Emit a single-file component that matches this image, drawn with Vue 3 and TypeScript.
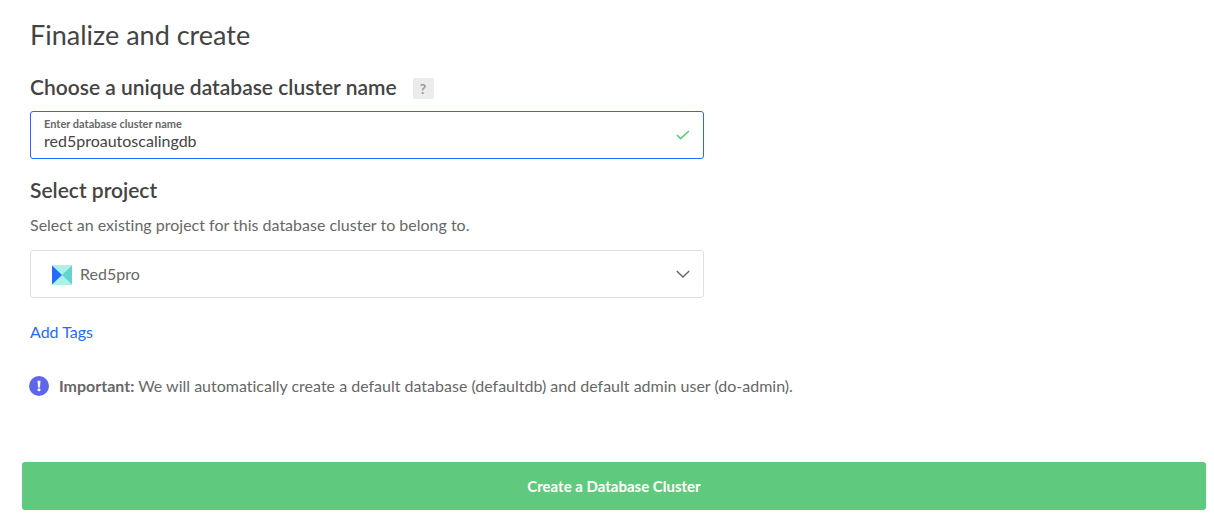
<script setup lang="ts">
import { ref } from 'vue'

const clusterName = ref<string>('red5proautoscalingdb')
const projects: string[] = ['Red5pro']
const project = ref<string>(projects[0])
</script>

<template>
  <main class="page">
    <form class="form" @submit.prevent>
      <div class="content">
        <h1>Finalize and create</h1>

        <section class="group">
          <div class="heading">
            <h2>Choose a unique database cluster name</h2>
            <button type="button" class="help" aria-label="Help with naming">?</button>
          </div>
          <div class="field">
            <label for="cluster-name">Enter database cluster name</label>
            <input id="cluster-name" v-model="clusterName" type="text" autocomplete="off" spellcheck="false" />
            <svg class="mark" width="14" height="10" viewBox="0 0 14 10" aria-hidden="true">
              <path d="M1 5 L4.6 8.6 L13 1" fill="none" stroke="#5fca7d" stroke-width="1.6" />
            </svg>
          </div>
        </section>

        <section class="group">
          <h2>Select project</h2>
          <label class="hint" for="project">Select an existing project for this database cluster to belong to.</label>
          <div class="picker">
            <svg class="logo" width="20" height="20" viewBox="0 0 20 20" aria-hidden="true">
              <rect width="20" height="20" fill="#adf0ea" />
              <path d="M0 0.5 L10 10 L0 19.5 Z" fill="#246bfd" />
              <path d="M20 0.5 L10 10 L20 19.5 Z" fill="#60d5d0" />
            </svg>
            <select id="project" v-model="project">
              <option v-for="name in projects" :key="name" :value="name">{{ name }}</option>
            </select>
            <svg class="mark" width="14" height="10" viewBox="0 0 14 10" aria-hidden="true">
              <path d="M0.8 1.9 L7 8.1 L13.2 1.9" fill="none" stroke="#676767" stroke-width="1.4" />
            </svg>
          </div>
        </section>

        <a class="tags" href="#tags">Add Tags</a>

        <p class="note">
          <svg width="20" height="20" viewBox="0 0 20 20" aria-hidden="true">
            <circle cx="10" cy="10" r="10" fill="#5f66ee" />
            <path d="M8.5 4.8 H11.5 L11 11.4 H9 Z" fill="#fff" />
            <circle cx="10" cy="13.8" r="1.5" fill="#fff" />
          </svg>
          <span><strong>Important:</strong> We will automatically create a default database (defaultdb) and default admin user (do-admin).</span>
        </p>
      </div>

      <button type="submit" class="submit">Create a Database Cluster</button>
    </form>
  </main>
</template>

<style>
body {
  margin: 0;
  background: #fff;
}
</style>

<style scoped>
.page {
  box-sizing: border-box;
  padding: 19px 8px 11px 22px;
  font-family: Lato, "Open Sans", sans-serif;
  font-size: 16px;
  line-height: 24px;
  font-variant-ligatures: none;
  color: #676767;
}
.content {
  display: flex;
  flex-direction: column;
  align-items: flex-start;
  padding: 0 8px;
}
h1,
h2,
p {
  margin: 0;
}
h1 {
  font-size: 27px;
  line-height: 32px;
  font-weight: 400;
  color: #444;
}
h2 {
  font-size: 21px;
  line-height: 24px;
  font-weight: 600;
  color: #444;
}
.group {
  width: 100%;
  max-width: 674px;
  margin-top: 24px;
}
.group + .group {
  margin-top: 19px;
}
.heading {
  display: flex;
  align-items: flex-end;
  gap: 16px;
}
.help {
  width: 21px;
  height: 21px;
  padding: 0;
  border: 0;
  border-radius: 2px;
  background: #ebebeb;
  color: #999;
  font: 700 14px/21px Lato, sans-serif;
}
.field,
.picker {
  position: relative;
  box-sizing: border-box;
  height: 48px;
  border: 1px solid #dfdfdf;
  border-radius: 3px;
}
.field {
  display: flex;
  flex-direction: column;
  margin-top: 12px;
  padding: 5px 48px 6px 13px;
  border-color: #246bfd;
}
.field label {
  font-size: 11px;
  line-height: 14px;
  font-weight: 700;
}
.field input {
  height: 20px;
  padding: 0;
  border: 0;
  outline: 0;
  background: transparent;
  color: #444;
  font: 400 16px/20px Lato, sans-serif;
}
.mark {
  position: absolute;
  top: 18px;
  right: 13px;
  pointer-events: none;
}
.hint {
  display: block;
  margin: 11px 0 13px;
}
.logo {
  position: absolute;
  top: 14px;
  left: 21px;
  pointer-events: none;
}
.picker select {
  display: block;
  width: 100%;
  height: 46px;
  padding: 0 48px 0 49px;
  border: 0;
  outline: 0;
  appearance: none;
  background: transparent;
  color: #676767;
  font: 400 16px/24px Lato, sans-serif;
}
.tags {
  margin-top: 22px;
  color: #246bfd;
  text-decoration: none;
}
.note {
  display: flex;
  align-items: center;
  gap: 10px;
  margin-top: 30px;
}
.note svg {
  flex: none;
  margin-left: -1px;
}
.note strong {
  font-weight: 700;
}
.submit {
  display: block;
  width: 100%;
  height: 48px;
  margin-top: 64px;
  border: 0;
  border-radius: 3px;
  background: #5fca7d;
  color: #fff;
  font: 700 15px/20px Lato, sans-serif;
}
</style>
